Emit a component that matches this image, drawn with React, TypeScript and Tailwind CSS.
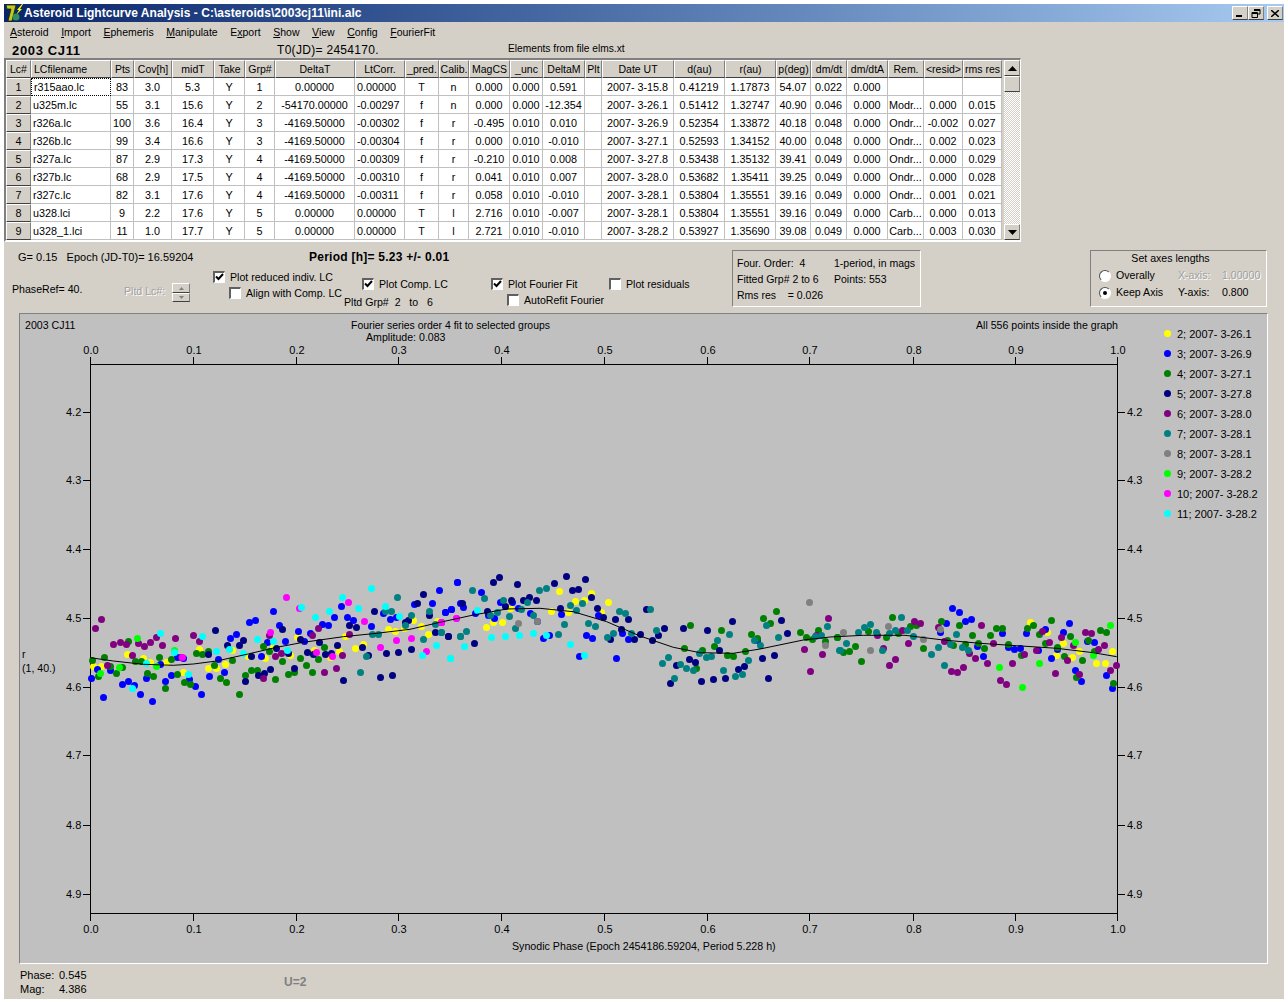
import React from "react";

type P = number[];
const crop = (a: P, ox: number, oy = 560) => {
  const r: [number, number][] = [];
  for (let i = 0; i < a.length; i += 2) r.push([ox + a[i] / 3, oy + a[i + 1] / 3]);
  return r;
};

const groups: { c: string; a: P; b: P; d: P }[] = [
  { c: "#ffff00",
    a: [100,319,124,319,202,283,250,295,271,307,319,307,370,337,418,268,445,325,469,325,496,313,517,271,565,289,616,295,640,262,691,286,712,232,763,271,811,292,838,274,856,229,886,265,910,253,985,208,1006,214,1033,205,1060,181,1084,199,1105,223,1132,184],
    b: [358,94,454,100,406,124,433,121,505,127,211,145,334,154,385,157,484,157,160,187,187,187,139,202],
    d: [601,187,652,217,679,286,700,250,727,292,748,274,799,310,826,310,847,274] },
  { c: "#0000ff",
    a: [94,355,112,328,130,412,151,331,187,373,205,364,223,376,241,403,259,355,277,424,301,313,316,364,334,346,352,292,370,295,388,358,406,379,424,403,448,349,475,298,493,337,511,235,529,223,568,187,586,181,604,289,622,247,640,154,658,196,676,244,715,214,733,244,751,220,787,193,805,196,823,172,844,139,862,172,880,181,934,199,970,160,991,178,1009,172,1063,133,1117,130,1138,91,1156,157,1174,148,1192,67,1201,130],
    b: [52,67,124,97,70,142,34,148,16,157,106,160,181,127,217,127,235,145,271,160,364,163,475,166,145,166,163,175,292,184,439,226,457,235,310,235,328,226,547,220,565,238,418,289,529,295,952,240],
    d: [367,145,388,157,406,184,424,178,349,190,331,217,517,220,442,259,460,289,535,262,553,268,571,265,589,220,646,208,625,271,664,295,682,268,700,217,718,190,736,331,754,364,772,244,793,247,829,346,847,385] },
  { c: "#008000",
    a: [97,301,133,292,205,244,115,349,169,340,187,322,151,319,226,304,244,304,262,340,280,349,298,292,334,298,316,385,352,343,373,367,391,373,409,280,427,283,445,274,463,316,481,355,499,367,517,301,538,403,556,346,574,331,592,331,610,259,628,274,646,358,667,304,685,343,703,337,721,295,739,316,757,337,775,298,793,262],
    b: [751,196,970,175,1009,154,991,190,844,211,934,223,952,235,1081,217,1099,232,1117,238,1135,211,1156,244,1192,232,823,259,733,265,787,271,862,286,880,289,916,274,769,325],
    d: [187,172,241,199,259,196,115,214,205,220,22,232,169,232,76,259,58,274,40,277,94,304,280,265,334,184,388,196,352,241,370,256,406,253,427,226,445,250,463,265,481,226,499,205,517,205,535,253,574,286,592,205,610,196,628,223,646,250,664,181,682,262,703,289,721,229,757,301,739,352,775,241,793,274,811,211,829,217,850,370] },
  { c: "#000080",
    a: [445,283,466,211,502,256,538,256,550,241,574,289,556,364,595,346,613,340,631,328,649,265,667,208,685,280,703,325,721,238,742,277,760,283,778,247,796,283,814,280,832,256,850,361,868,196,889,202,907,262,925,286,943,154,961,352,979,280,997,346,1015,277,1036,187,1045,181,1054,268,1072,130,1090,103,1108,166,1126,217,1165,229],
    b: [160,67,178,52,232,73,343,70,379,49,436,58,397,91,415,88,454,112,268,112,250,121,214,121,289,121,67,130,142,154,196,139,361,145,472,145,490,172,526,178,565,178,544,208,601,223,619,148,655,226,637,241,673,205,730,205,802,211,877,184,1024,181,1042,220,1003,286,967,295,838,271,748,298,766,307,709,316,691,370,784,364,820,358,856,355,895,328,913,319,985,355,25,229,103,250,511,238,583,238],
    d: [] },
  { c: "#800080",
    a: [124,178,106,205,160,253,181,247,199,253,235,250,253,259,271,247,289,232,307,256,346,235,400,226,418,244,217,286,142,316,364,292,610,355,628,226,646,289,664,280,757,226,775,205,793,337,829,325,847,286,868,223,1144,187],
    b: [1165,175,1129,226,1093,268,1147,283,1111,334],
    d: [142,226,217,211,253,184,271,190,235,250,160,265,196,298,178,316,325,202,343,244,364,334,382,337,400,322,418,280,436,295,454,196,472,310,490,250,511,361,529,373,547,310,583,283,619,271,637,214,658,247,676,340,694,232,712,301,730,256,748,343,766,217,784,220,805,268,823,256,841,331,859,316] },
  { c: "#008080",
    a: [1012,112,994,154,1054,166,1036,196,1108,154,1090,238,1126,193,1144,217,1201,229,937,223,955,223,919,289,901,337,976,154],
    b: [97,91,133,115,298,91,319,85,190,121,262,127,244,148,172,157,151,166,208,169,280,166,391,136,409,151,427,130,373,193,445,190,466,199,538,154,556,160,631,148,649,211,520,220,502,232,574,220,355,223,226,205,79,214,61,229,4,217,868,223,832,241,943,241,961,256,1015,232,979,196,1162,199,1126,229,1144,226,1198,271,799,292,814,289,778,280,685,292,667,310,721,313,739,325,760,331,703,355,850,331,886,349,907,343,925,301],
    d: [121,193,103,202,214,172,85,217,139,217,178,220,196,211,232,211,250,229,49,250,31,271,157,271,304,283,325,262,343,316,361,253,379,223,397,262,415,271] },
  { c: "#808080",
    a: [],
    b: [1108,127,235,190,292,184,1156,256],
    d: [40,217,175,199,121,271,280,238,331,208] },
  { c: "#00ff00",
    a: [232,235,343,271,121,340,178,322,289,319],
    b: [],
    d: [508,322,628,310,577,382,736,247,790,286,841,196] },
  { c: "#ff00ff",
    a: [679,112,865,127,718,145,631,217,913,184,1009,241,1054,235,961,262,1099,274,769,277,817,289,1189,175,1144,187,367,292],
    b: [4,187,49,175],
    d: [] },
  { c: "#00ffff",
    a: [934,85,847,112,724,142,766,172,808,154,895,145,976,139,1018,169,301,220,427,229,592,238,640,244,508,268,469,274,550,280,682,271,343,277,259,310,217,385,385,343,1129,256,1087,286,1171,295],
    b: [112,151,319,226,280,220,238,226,196,229,154,232,73,259,31,295,391,253,433,286],
    d: [] },
];

const curve = [
  ...crop([91,293,160,303,250,313,340,316,400,312,470,303,560,283,650,262,730,247,850,230,950,220,1050,208], 60),
  ...crop([0,187,100,165,200,147,300,145,400,155,500,185,600,228,700,262,780,278,880,280,960,267,1090,240,1170,231], 440),
  ...crop([100,226,225,226,340,240,450,250,560,257,680,265,790,278,860,290], 830),
].map((p) => p.map((v) => v.toFixed(1)).join(",")).join(" ");

const xt = [90, 193, 296, 398, 501, 604, 707, 809, 913, 1015, 1117];
const yt = [412, 480, 549, 618, 687, 755, 825, 894];
const legend = ["2; 2007- 3-26.1","3; 2007- 3-26.9","4; 2007- 3-27.1","5; 2007- 3-27.8","6; 2007- 3-28.0","7; 2007- 3-28.1","8; 2007- 3-28.1","9; 2007- 3-28.2","10; 2007- 3-28.2","11; 2007- 3-28.2"];

const rowCols = "grid grid-cols-[25px_80px_23px_38px_42px_31px_30px_80px_50px_34px_30px_41px_33px_42px_17px_72px_51px_51px_35px_36px_41px_36px_39px_39px]";
const bevel = "bg-[#d4d0c8] border-t border-l border-t-white border-l-white border-r border-b border-r-[#808080] border-b-[#404040]";

const headers = ["Lc#","LCfilename","Pts","Cov[h]","midT","Take","Grp#","DeltaT","LtCorr.","_pred.","Calib.","MagCS","_unc","DeltaM","Plt","Date UT","d(au)","r(au)","p(deg)","dm/dt","dm/dtA","Rem.","<resid>","rms res"];
const rows: string[][] = [
  ["1","r315aao.lc","83","3.0","5.3","Y","1","0.00000","0.00000","T","n","0.000","0.000","0.591","","2007- 3-15.8","0.41219","1.17873","54.07","0.022","0.000","","",""],
  ["2","u325m.lc","55","3.1","15.6","Y","2","-54170.00000","-0.00297","f","n","0.000","0.000","-12.354","","2007- 3-26.1","0.51412","1.32747","40.90","0.046","0.000","Modr...","0.000","0.015"],
  ["3","r326a.lc","100","3.6","16.4","Y","3","-4169.50000","-0.00302","f","r","-0.495","0.010","0.010","","2007- 3-26.9","0.52354","1.33872","40.18","0.048","0.000","Ondr...","-0.002","0.027"],
  ["4","r326b.lc","99","3.4","16.6","Y","3","-4169.50000","-0.00304","f","r","0.000","0.010","-0.010","","2007- 3-27.1","0.52593","1.34152","40.00","0.048","0.000","Ondr...","0.002","0.023"],
  ["5","r327a.lc","87","2.9","17.3","Y","4","-4169.50000","-0.00309","f","r","-0.210","0.010","0.008","","2007- 3-27.8","0.53438","1.35132","39.41","0.049","0.000","Ondr...","0.000","0.029"],
  ["6","r327b.lc","68","2.9","17.5","Y","4","-4169.50000","-0.00310","f","r","0.041","0.010","0.007","","2007- 3-28.0","0.53682","1.35411","39.25","0.049","0.000","Ondr...","0.000","0.028"],
  ["7","r327c.lc","82","3.1","17.6","Y","4","-4169.50000","-0.00311","f","r","0.058","0.010","-0.010","","2007- 3-28.1","0.53804","1.35551","39.16","0.049","0.000","Ondr...","0.001","0.021"],
  ["8","u328.lci","9","2.2","17.6","Y","5","0.00000","0.00000","T","l","2.716","0.010","-0.007","","2007- 3-28.1","0.53804","1.35551","39.16","0.049","0.000","Carb...","0.000","0.013"],
  ["9","u328_1.lci","11","1.0","17.7","Y","5","0.00000","0.00000","T","l","2.721","0.010","-0.010","","2007- 3-28.2","0.53927","1.35690","39.08","0.049","0.000","Carb...","0.003","0.030"],
];

const Check = ({ on, label }: { on?: boolean; label: string }) => (
  <div className="flex items-center h-[12px] whitespace-pre">
    <span className="w-[12px] h-[12px] mr-[5px] shrink-0 bg-white border-t-2 border-l-2 border-t-[#606060] border-l-[#606060] border-r border-b border-r-white border-b-white flex items-center justify-center">
      {on && (
        <svg width="9" height="9" viewBox="0 0 9 9">
          <path d="M1 3.500l2.500 2.500L8 1" fill="none" stroke="#000" strokeWidth="2" />
        </svg>
      )}
    </span>
    {label}
  </div>
);

const Radio = ({ on, label }: { on?: boolean; label: string }) => (
  <div className="flex items-center h-[13px]">
    <span className="w-[12px] h-[12px] mr-[5px] rounded-full bg-white border border-t-[#505050] border-l-[#505050] border-r-white border-b-white flex items-center justify-center">
      {on && <span className="w-[4px] h-[4px] rounded-full bg-black" />}
    </span>
    {label}
  </div>
);

const Menu = ({ a, u, b }: { a: string; u: string; b: string }) => (
  <span className="whitespace-pre">{a}<span className="underline">{u}</span>{b}</span>
);

const WinBtn = ({ children }: { children: React.ReactNode }) => (
  <div className={`w-[16px] h-[14px] flex items-center justify-center ${bevel}`}>{children}</div>
);

const Arrow = ({ up }: { up?: boolean }) => (
  <div className={`w-[16px] h-[16px] flex items-center justify-center shrink-0 ${bevel}`}>
    <svg width="9" height="5" viewBox="0 0 9 5"><path d={up ? "M4.5 0L9 5H0z" : "M0 0h9L4.5 5z"} fill="#000" /></svg>
  </div>
);

export default function App() {
  return (
    <div className="w-[1288px] h-[1002px] bg-white pt-[4px] overflow-hidden font-['Liberation_Sans',Arial,sans-serif] text-[10.6px] leading-[13px] text-black">
      <div className="mx-[4px] h-[996px] bg-[#d4d0c8] flex flex-col border-b border-b-white">
        {/* title bar */}
        <div className="h-[18px] shrink-0 flex items-center bg-gradient-to-r from-[#0a246a] to-[#a6caf0] pl-[1px] pr-[1px]">
          <svg width="18" height="18" viewBox="0 0 18 18" className="mr-[1px] shrink-0">
            <path d="M1 1h10L7 17H3l3-12H2z" fill="#c4c820" stroke="#182800" strokeWidth="0.8" />
            <path d="M17 0l-5 6h2l-3 5 6-6h-2l3-5z" fill="#ffff00" />
            <circle cx="11" cy="13" r="3.500" fill="#2f8f5f" />
          </svg>
          <span className="text-white font-bold text-[12px] whitespace-pre tracking-[0.03px]">Asteroid Lightcurve Analysis - C:\asteroids\2003cj11\ini.alc</span>
          <div className="ml-auto flex">
            <WinBtn><span className="w-[6px] h-[2px] bg-black mt-[6px] mr-[2px]" /></WinBtn>
            <WinBtn>
              <svg width="10" height="9" viewBox="0 0 10 9"><path d="M3 .5h6v4.500H7M1 3.500h5.500v5H1zM1 4.500h5.500M3 1.500h6" fill="none" stroke="#000" /></svg>
            </WinBtn>
            <div className="w-[3px]" />
            <WinBtn>
              <svg width="8" height="7" viewBox="0 0 8 7"><path d="M0 0l8 7M8 0L0 7" stroke="#000" strokeWidth="1.500" /></svg>
            </WinBtn>
          </div>
        </div>
        {/* menu */}
        <div className="h-[18px] shrink-0 flex items-center pl-[6px] pt-[2px] gap-[12.6px] text-[10.5px]">
          <Menu a="" u="A" b="steroid" />
          <Menu a="" u="I" b="mport" />
          <Menu a="" u="E" b="phemeris" />
          <Menu a="" u="M" b="anipulate" />
          <Menu a="E" u="x" b="port" />
          <Menu a="" u="S" b="how" />
          <Menu a="" u="V" b="iew" />
          <Menu a="" u="C" b="onfig" />
          <Menu a="" u="F" b="ourierFit" />
        </div>
        {/* heading */}
        <div className="h-[18px] shrink-0 flex items-center pl-[8px] pt-[2px]">
          <span className="font-bold text-[13px] w-[265px] tracking-[0.65px]">2003 CJ11</span>
          <span className="text-[12px] w-[231px] tracking-[0.3px]">T0(JD)= 2454170.</span>
          <span className="text-[10.2px] mb-[4px]">Elements from file elms.xt</span>
        </div>
        {/* grid */}
        <div className="w-[1017px] h-[184px] shrink-0 flex border-t-2 border-l-2 border-b-2 border-r border-t-[#808080] border-l-[#808080] border-b-white border-r-white">
          <div className="w-[996px]">
            <div className={`${rowCols} text-[10.5px]`}>
              {headers.map((h) => (
                <div key={h} className={`h-[18px] flex items-center justify-center whitespace-nowrap overflow-hidden ${bevel} ${h === "LCfilename" ? "justify-start pl-[2px]" : ""}`}>{h}</div>
              ))}
            </div>
            {rows.map((r) => (
              <div key={r[0]} className={`${rowCols} text-[10.8px]`}>
                {r.map((v, i) => {
                  if (i === 0) return <div key={i} className={`h-[18px] flex items-center justify-center pt-[1px] ${bevel}`}>{v}</div>;
                  const focus = r[0] === "1" && i === 1;
                  const left = i === 1 || i === 8;
                  return (
                    <div key={i} className={`h-[18px] flex items-center whitespace-nowrap overflow-hidden bg-white pt-[1px] ${focus ? "border border-dotted border-black" : "border-r border-b border-r-[#c0c0c0] border-b-[#c0c0c0]"} ${left ? "justify-start pl-[2px]" : "justify-center"}`}>{v}</div>
                  );
                })}
              </div>
            ))}
          </div>
          <div className="ml-[2px] w-[16px] flex flex-col bg-[repeating-conic-gradient(#d4d0c8_0_25%,#ffffff_0_50%)] bg-[length:2px_2px]">
            <Arrow up />
            <div className={`w-[16px] h-[16px] shrink-0 ${bevel}`} />
            <div className="flex-1" />
            <Arrow />
          </div>
        </div>
        {/* controls */}
        <div className="h-[71px] shrink-0 flex">
          <div className="w-[209px]">
            <div className="pl-[14px] pt-[9px] whitespace-pre text-[11px]">G= 0.15   Epoch (JD-T0)= 16.59204</div>
            <div className="flex items-start mt-[19px]">
              <span className="pl-[8px] w-[120px]">PhaseRef= 40.</span>
              <span className="w-[48px] mt-[2px] text-[#a0a0a0] [text-shadow:1px_1px_0_#ffffff]">Pltd Lc#:</span>
              <div className="w-[18px] flex flex-col">
                <div className={`h-[10px] flex items-center justify-center ${bevel}`}><svg width="5" height="3" viewBox="0 0 5 3"><path d="M2.500 0L5 3H0z" fill="#808080" /></svg></div>
                <div className={`h-[9px] flex items-center justify-center ${bevel}`}><svg width="5" height="3" viewBox="0 0 5 3"><path d="M0 0h5L2.500 3z" fill="#808080" /></svg></div>
              </div>
            </div>
          </div>
          <div className="w-[278px]">
            <div className="pl-[96px] pt-[9px] font-bold text-[12px] whitespace-pre tracking-[0.25px]">Period [h]= 5.23 +/- 0.01</div>
            <div className="flex">
              <div className="w-[131px] pt-[7px]">
                <Check on label="Plot reduced indiv. LC" />
                <div className="ml-[16px] mt-[4px]"><Check label="Align with Comp. LC" /></div>
              </div>
              <div className="pt-[14px]">
                <div className="ml-[18px]"><Check on label="Plot Comp. LC" /></div>
                <div className="mt-[6px] whitespace-pre">Pltd Grp#  2   to   6</div>
              </div>
            </div>
          </div>
          <div className="w-[241px] pt-[36px]">
            <div className="flex">
              <div className="w-[118px]"><Check on label="Plot Fourier Fit" /></div>
              <Check label="Plot residuals" />
            </div>
            <div className="ml-[16px] mt-[4px]"><Check label="AutoRefit Fourier" /></div>
          </div>
          <div className="w-[189px] h-[57px] mt-[8px] border border-t-[#808080] border-l-[#808080] border-r-white border-b-white pl-[4px] pt-[4px] grid grid-cols-[97px_1fr] auto-rows-[16px] items-center whitespace-pre text-[10.5px]">
            <span>Four. Order:  4</span><span>1-period, in mags</span>
            <span>Fitted Grp# 2 to 6</span><span>Points: 553</span>
            <span>Rms res    = 0.026</span><span />
          </div>
          <div className="w-[177px] h-[57px] mt-[8px] ml-[169px] border border-t-[#808080] border-l-[#808080] border-r-white border-b-white">
            <div className="text-center pr-[16px] pt-[1px]">Set axes lengths</div>
            <div className="flex items-center pl-[8px] mt-[4px] h-[13px]">
              <div className="w-[79px]"><Radio label="Overally" /></div>
              <span className="w-[44px] text-[#a0a0a0] [text-shadow:1px_1px_0_#ffffff]">X-axis:</span>
              <span className="text-[#a0a0a0] [text-shadow:1px_1px_0_#ffffff]">1.00000</span>
            </div>
            <div className="flex items-center pl-[8px] mt-[4px] h-[13px]">
              <div className="w-[79px]"><Radio on label="Keep Axis" /></div>
              <span className="w-[44px]">Y-axis:</span>
              <span>0.800</span>
            </div>
          </div>
        </div>
        {/* plot */}
        <div className="ml-[15px] w-[1249px] h-[651px] shrink-0 bg-[#c0c0c0] border-t border-l border-t-[#808080] border-l-[#808080] border-b border-r border-b-white border-r-white">
          <svg width="1247" height="649" viewBox="20 314 1247 649" className="block" fontSize="11" fill="#000">
            <text x="25" y="329" fontSize="10.6">2003 CJ11</text>
            <text x="351" y="329" fontSize="10.45">Fourier series order 4 fit to selected groups</text>
            <text x="366" y="341" fontSize="10.6">Amplitude: 0.083</text>
            <text x="976" y="329" fontSize="10.6">All 556 points inside the graph</text>
            <text x="22" y="658" fontSize="10.6">r</text>
            <text x="22" y="672" fontSize="10.6">(1, 40.)</text>
            <text x="512" y="950" fontSize="10.67">Synodic Phase (Epoch 2454186.59204, Period 5.228 h)</text>
            <g stroke="#000" strokeWidth="1" shapeRendering="crispEdges">
              <rect x="90.500" y="364.500" width="1027" height="549" fill="none" />
              {xt.map((x) => (
                <g key={x}>
                  <line x1={x + 0.5} x2={x + 0.5} y1="357" y2="364" />
                  <line x1={x + 0.5} x2={x + 0.5} y1="914" y2="921" />
                </g>
              ))}
              {yt.map((y) => (
                <g key={y}>
                  <line x1="83" x2="90" y1={y + 0.5} y2={y + 0.5} />
                  <line x1="1118" x2="1125" y1={y + 0.5} y2={y + 0.5} />
                </g>
              ))}
            </g>
            {xt.map((x, i) => (
              <g key={x} textAnchor="middle">
                <text x={x + 1} y="354">{(i / 10).toFixed(1)}</text>
                <text x={x + 1} y="933">{(i / 10).toFixed(1)}</text>
              </g>
            ))}
            {yt.map((y, i) => (
              <g key={y}>
                <text x="66" y={y + 4}>{(4.2 + i / 10).toFixed(1)}</text>
                <text x="1127" y={y + 4}>{(4.2 + i / 10).toFixed(1)}</text>
              </g>
            ))}
            <g>
              {groups.map((g) => (
                <g key={g.c} fill={g.c}>
                  {[...crop(g.a, 60), ...crop(g.b, 440), ...crop(g.d, 830)].map(([x, y], i) => (
                    <circle key={i} cx={Math.floor(x) + 0.5} cy={Math.floor(y) + 0.5} r="3.500" />
                  ))}
                </g>
              ))}
            </g>
            <polyline points={curve} fill="none" stroke="#000" strokeWidth="1" />
            {legend.map((t, i) => (
              <g key={t}>
                <circle cx="1167.500" cy={333.5 + i * 20} r="3.500" fill={groups[i].c} />
                <text x="1177" y={338 + i * 20}>{t}</text>
              </g>
            ))}
          </svg>
        </div>
        {/* footer */}
        <div className="flex-1 flex pl-[16px] pt-[4px] text-[11px]">
          <div className="w-[264px] grid grid-cols-[39px_1fr] auto-rows-[14px] items-center h-[28px]">
            <span>Phase:</span><span>0.545</span>
            <span>Mag:</span><span>4.386</span>
          </div>
          <span className="font-bold text-[#808080] text-[12px] mt-[8px]">U=2</span>
        </div>
      </div>
    </div>
  );
}
